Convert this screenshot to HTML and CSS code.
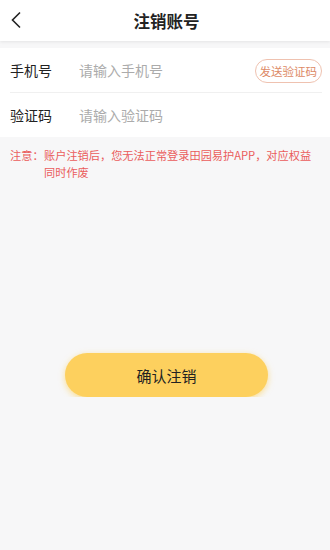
FILE: index.html
```html
<!DOCTYPE html>
<html lang="zh-CN">
<head>
    <meta charset="UTF-8">
    <meta name="viewport" content="width=device-width, initial-scale=1.0">
    <title>注销账号</title>
    <link rel="stylesheet" href="styles.css">
</head>
<body>
    <div class="header">
        <svg class="back" width="12" height="18" viewBox="0 0 12 18">
            <path d="M10 1.5 L2.5 9 L10 16.5" fill="none" stroke="#222" stroke-width="1.6"/>
        </svg>
        <h1>注销账号</h1>
    </div>
    <div class="form-card">
        <div class="form-row">
            <label for="phone">手机号</label>
            <input type="text" id="phone" placeholder="请输入手机号">
            <button class="code-button">发送验证码</button>
        </div>
        <div class="form-row">
            <label for="code">验证码</label>
            <input type="text" id="code" placeholder="请输入验证码">
        </div>
    </div>
    <div class="notice">
        <span class="notice-title">注意：</span>
        <span class="notice-text">账户注销后，您无法正常登录田园易护APP，对应权益同时作废</span>
    </div>
    <div class="submit-wrap">
        <button class="submit-button">确认注销</button>
    </div>
</body>
</html>
```

FILE: styles.css
```css
body {
    font-family: "Noto Sans CJK SC", "Noto Sans", sans-serif;
    margin: 0;
    background-color: #f7f7f8;
    color: #222;
}
.header {
    height: 41px;
    background: white;
    box-shadow: 0 1px 3px rgba(0, 0, 0, 0.08);
    display: flex;
    align-items: center;
    justify-content: center;
    position: relative;
}
.back {
    position: absolute;
    left: 10px;
    top: 11px;
}
h1 {
    font-size: 16.5px;
    font-weight: bold;
    margin: 0 0 0 3px;
    color: #222;
}
.form-card {
    background: white;
    margin-top: 7px;
    padding: 0 8px 0 10px;
}
.form-row {
    display: flex;
    align-items: center;
    height: 44px;
}
.form-row + .form-row {
    border-top: 1px solid #f0f0f0;
}
label {
    font-size: 14px;
    width: 69px;
    color: #222;
}
input {
    flex: 1;
    border: none;
    outline: none;
    font-family: inherit;
    font-size: 14px;
    padding: 0;
    min-width: 0;
}
input::placeholder {
    color: #ababab;
}
.code-button {
    font-family: inherit;
    font-size: 11.5px;
    color: #dd8a66;
    background: white;
    border: 1px solid #efc2b0;
    border-radius: 12px;
    height: 24px;
    padding: 0 4px;
    margin-top: 2px;
}
.notice {
    display: flex;
    padding: 10px 8px 0 10px;
    font-size: 11.2px;
    line-height: 17px;
    color: #ea5c5c;
}
.notice-title {
    flex-shrink: 0;
    width: 34px;
}
.submit-wrap {
    display: flex;
    justify-content: center;
    margin-top: 172px;
}
.submit-button {
    font-family: inherit;
    width: 203px;
    height: 44px;
    border: none;
    border-radius: 22px;
    background-color: #fdd05e;
    box-shadow: 0 2px 6px rgba(253, 200, 60, 0.55);
    font-size: 15px;
    color: #222;
    margin-left: 3px;
}
```
